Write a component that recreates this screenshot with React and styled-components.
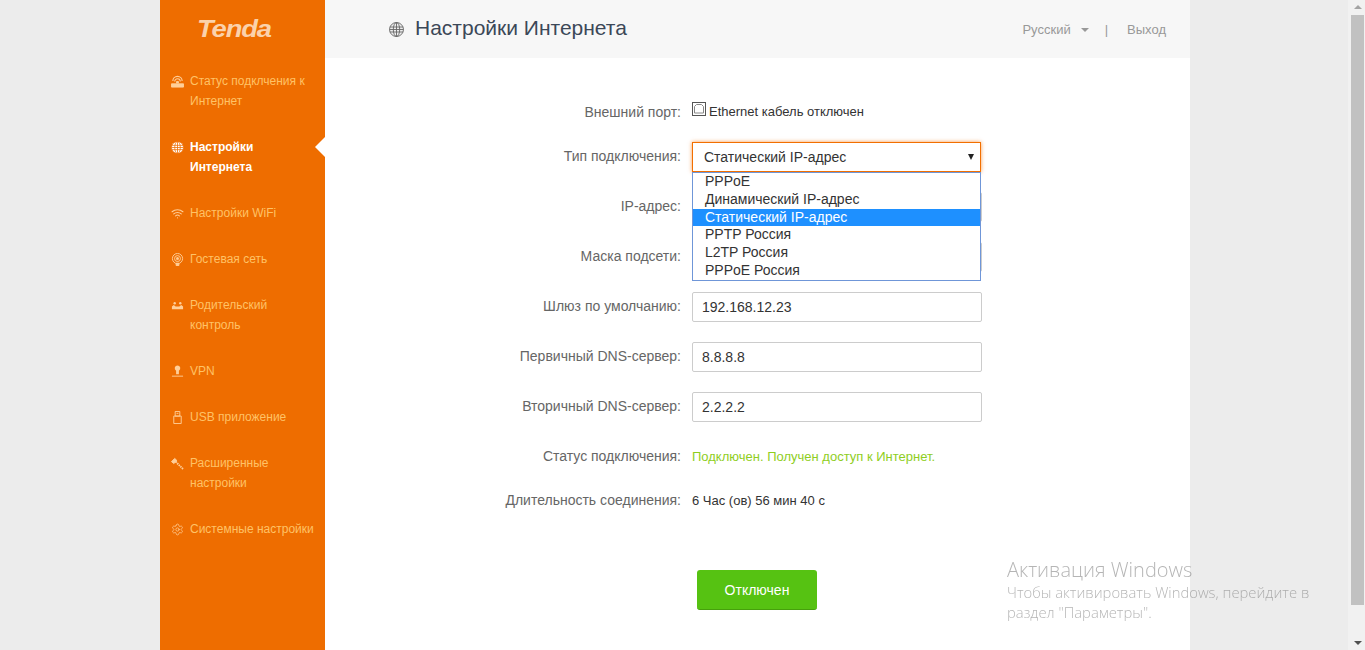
import styled, { createGlobalStyle } from "styled-components";
import { Wifi, Settings } from "lucide-react";

const GlobalStyle = createGlobalStyle`
    html, body {
        margin: 0;
        height: 100%;
        overflow: hidden;
        background: #ececec;
        font-family: "Liberation Sans", Arial, sans-serif;
    }
`;

const Shell = styled.div`
    display: flex;
    height: 650px;
`;

const Page = styled.div`
    display: flex;
    width: 1030px;
    margin-left: 160px;
`;

const Sidebar = styled.aside`
    width: 165px;
    flex-shrink: 0;
    background: #ee6d00;
`;

const Logo = styled.div`
    height: 71px;
    padding: 14px 0 0 37px;
    box-sizing: border-box;
    font-size: 24px;
    line-height: 30px;
    font-weight: bold;
    font-style: italic;
    letter-spacing: -1px;
    color: #fbd2ab;
    transform: scaleX(1.14);
    transform-origin: 37px 0;
`;

const NavItem = styled.div`
    position: relative;
    display: flex;
    padding-left: 11px;
    margin-bottom: 26px;
    font-size: 12px;
    line-height: 20px;
    color: ${(p) => (p.$active ? "#fff" : "#ffc266")};
    font-weight: ${(p) => (p.$active ? "bold" : "normal")};

    ${(p) => p.$active && `
        &::after {
            content: "";
            position: absolute;
            right: 0;
            top: 0;
            border: 10px solid transparent;
            border-left: 0;
            border-right-color: #fff;
        }
    `}
`;

const NavIcon = styled.span`
    width: 19px;
    height: 20px;
    flex-shrink: 0;
    display: flex;
    align-items: center;
    color: ${(p) => (p.$active ? "#fff" : "#ffcf99")};

    svg {
        width: 13px;
        height: 13px;
        display: block;
    }
`;

const Main = styled.main`
    flex: 1;
    background: #fff;
`;

const TopBar = styled.header`
    height: 58px;
    background: #f7f7f7;
    display: flex;
    align-items: center;
    justify-content: space-between;
    padding: 0 24px 0 64px;
`;

const Title = styled.h1`
    display: flex;
    align-items: center;
    gap: 11px;
    margin: 0;
    padding-bottom: 2px;
    font-size: 21px;
    font-weight: normal;
    color: #3c4858;

    svg {
        width: 15px;
        height: 15px;
        margin-top: 3px;
    }
`;

const TopLinks = styled.div`
    display: flex;
    align-items: center;
    font-size: 13px;
    color: #999;
`;

const Caret = styled.span`
    width: 0;
    height: 0;
    margin: 2px 16px 0 10px;
    border: 4px solid transparent;
    border-bottom: 0;
    border-top-color: #999;
`;

const Divider = styled.span`
    margin-right: 19px;
`;

const Form = styled.div`
    padding-top: 40px;
    position: relative;
`;

const Row = styled.div`
    display: flex;
    align-items: center;
    height: 30px;
    margin-bottom: ${(p) => p.$gap ?? 20}px;
`;

const Label = styled.label`
    width: 356px;
    flex-shrink: 0;
    margin-right: 11px;
    padding-bottom: 2px;
    text-align: right;
    font-size: 14px;
    color: #666;
`;

const Input = styled.div`
    width: 290px;
    height: 30px;
    box-sizing: border-box;
    border: 1px solid #ccc;
    border-radius: 2px;
    padding-left: 9px;
    font-size: 14px;
    line-height: 28px;
    color: #333;
`;

const PortInfo = styled.div`
    display: flex;
    align-items: center;
    gap: 3px;
    padding-bottom: 4px;
    font-size: 13px;
    color: #333;

    svg {
        width: 14px;
        height: 14px;
        margin-bottom: 5px;
    }
`;

const SelectBox = styled.div`
    width: 289px;
    height: 30px;
    box-sizing: border-box;
    display: flex;
    align-items: center;
    justify-content: space-between;
    padding: 0 6px 0 11px;
    border: 1px solid #f26f00;
    box-shadow: 0 0 4px rgba(242, 111, 0, 0.7);
    font-size: 14px;
    color: #333;
`;

const SelectArrow = styled.span`
    width: 0;
    height: 0;
    border: 3.5px solid transparent;
    border-bottom: 0;
    border-top: 6px solid #222;
`;

const Menu = styled.ul`
    position: absolute;
    left: 367px;
    top: 114px;
    width: 289px;
    box-sizing: border-box;
    margin: 0;
    padding: 0;
    list-style: none;
    background: #fff;
    border: 1px solid #6f96d8;
    font-size: 14px;
    color: #333;
`;

const MenuItem = styled.li`
    height: 17.8px;
    line-height: 17.8px;
    padding-left: 12px;
    background: ${(p) => (p.$selected ? "#1e90ff" : "transparent")};
    color: ${(p) => (p.$selected ? "#fff" : "inherit")};
`;

const StatusText = styled.span`
    padding-bottom: 2px;
    font-size: 13px;
    color: ${(p) => p.$color};
`;

const Actions = styled.div`
    margin: 54px 0 0 372px;
`;

const Button = styled.button`
    width: 120px;
    height: 40px;
    border: 0;
    border-bottom: 1px solid #46a00c;
    border-radius: 3px;
    background: #56c212;
    color: #fff;
    font: 14px "Liberation Sans", Arial, sans-serif;
`;

const Watermark = styled.div`
    position: fixed;
    left: 1007px;
    top: 557px;
    font-family: "Open Sans", sans-serif;
    font-weight: 300;
    font-size: 14.8px;
    line-height: 20px;
    color: rgba(120, 120, 120, 0.55);
    pointer-events: none;

    strong {
        display: block;
        font-weight: 300;
        font-size: 20px;
        line-height: 26px;
        margin-bottom: -1px;
    }
`;

const Scrollbar = styled.div`
    margin-left: auto;
    width: 17px;
    box-sizing: border-box;
    padding: 5px 1px 5px 3px;
    background: #f1f1f1;
    display: flex;
    flex-direction: column;
    align-items: center;
`;

const ScrollThumb = styled.div`
    width: 13px;
    height: 590px;
    margin: 6px 0 auto;
    background: #c1c1c1;
`;

const ScrollUp = styled.div`
    width: 0;
    height: 0;
    border: 4px solid transparent;
    border-top: 0;
    border-bottom-color: #a3a3a3;
`;

const ScrollDown = styled.div`
    width: 0;
    height: 0;
    border: 4px solid transparent;
    border-bottom: 0;
    border-top-color: #505050;
`;

const RouterIcon = () => (
    <svg viewBox="0 0 14 14" fill="none" stroke="currentColor">
        <path d="M.5 9.5V13h13V9.5z" fill="currentColor" />
        <path d="M2 6.5a5 5 0 0 1 10 0" strokeWidth="1.2" />
        <path d="M4 7a3 3 0 0 1 6 0" strokeWidth="1.2" />
        <path d="M6 9V7h2v2" fill="currentColor" />
    </svg>
);

const GridGlobe = ({ fill, line }) => (
    <svg viewBox="0 0 15 15" fill={fill} stroke={line} strokeWidth="0.9">
        <circle cx="7.5" cy="7.5" r="7" />
        <ellipse cx="7.5" cy="7.5" rx="3.2" ry="7" fill="none" />
        <path d="M7.5.5v14M1 5h13M1 10h13M.5 7.5h14" fill="none" />
    </svg>
);

const ParentIcon = () => (
    <svg viewBox="0 0 14 14" fill="currentColor">
        <path d="M1 11V8l2-1.5L5 8h4l2-1.5L13 8v3z" />
        <circle cx="4" cy="4.5" r="1.3" />
        <circle cx="10" cy="4.5" r="1.3" />
    </svg>
);

const GuestIcon = () => (
    <svg viewBox="0 0 14 14" fill="none" stroke="currentColor" strokeWidth="1">
        <circle cx="7" cy="6" r="5.5" />
        <circle cx="7" cy="6" r="3.2" />
        <circle cx="7" cy="6" r="1.2" fill="currentColor" />
        <path d="M5.5 11h3v2.5h-3z" fill="currentColor" />
    </svg>
);

const VpnIcon = () => (
    <svg viewBox="0 0 14 14" fill="currentColor">
        <path d="M7 .5a3 3 0 0 1 1.5 5.6V10h-3V6.1A3 3 0 0 1 7 .5z" />
        <path d="M1 11.5h12v1H1z" />
    </svg>
);

const UsbStickIcon = () => (
    <svg viewBox="0 0 14 14" fill="none" stroke="currentColor" strokeWidth="1">
        <path d="M4.5.5h5v5h-5zM3 5.5h8v8H3zM6 2.5h2" />
    </svg>
);

const HammerIcon = () => (
    <svg viewBox="0 0 14 14" fill="none" stroke="currentColor">
        <path d="M.5 5 4 1.5 6.5 4 3 7z" fill="currentColor" />
        <path d="M5 5l8 8" strokeWidth="2" strokeDasharray="1.6 .8" />
    </svg>
);

const navItems = [
    { icon: <RouterIcon />, lines: ["Статус подклчения к", "Интернет"] },
    { icon: <GridGlobe fill="currentColor" line="#ee6d00" />, lines: ["Настройки", "Интернета"], active: true },
    { icon: <Wifi />, lines: ["Настройки WiFi"] },
    { icon: <GuestIcon />, lines: ["Гостевая сеть"] },
    { icon: <ParentIcon />, lines: ["Родительский", "контроль"] },
    { icon: <VpnIcon />, lines: ["VPN"] },
    { icon: <UsbStickIcon />, lines: ["USB приложение"] },
    { icon: <HammerIcon />, lines: ["Расширенные", "настройки"] },
    { icon: <Settings strokeWidth={1.4} />, lines: ["Системные настройки"] },
];

const connectionTypes = [
    "PPPoE",
    "Динамический IP-адрес",
    "Статический IP-адрес",
    "PPTP Россия",
    "L2TP Россия",
    "PPPoE Россия",
];

export default function App() {
    return (
        <>
            <GlobalStyle />
            <Shell>
                <Page>
                    <Sidebar>
                        <Logo>Tenda</Logo>
                        {navItems.map((item) => (
                            <NavItem key={item.lines[0] + item.lines.length} $active={item.active}>
                                <NavIcon $active={item.active}>{item.icon}</NavIcon>
                                <div>
                                    {item.lines.map((line) => (
                                        <div key={line}>{line}</div>
                                    ))}
                                </div>
                            </NavItem>
                        ))}
                    </Sidebar>

                    <Main>
                        <TopBar>
                            <Title>
                                <GridGlobe fill="#eee" line="#666" />
                                Настройки Интернета
                            </Title>
                            <TopLinks>
                                Русский
                                <Caret />
                                <Divider>|</Divider>
                                Выход
                            </TopLinks>
                        </TopBar>

                        <Form>
                            <Row $gap={14}>
                                <Label>Внешний порт:</Label>
                                <PortInfo>
                                    <svg viewBox="0 0 14 14" fill="none" stroke="#555">
                                        <rect x="0.5" y="0.5" width="13" height="13" />
                                        <path d="M2.5 11V4.5L4.5 2.5h5l2 2V11z" stroke="#888" />
                                    </svg>
                                    Ethernet кабель отключен
                                </PortInfo>
                            </Row>
                            <Row>
                                <Label>Тип подключения:</Label>
                                <SelectBox>
                                    Статический IP-адрес
                                    <SelectArrow />
                                </SelectBox>
                            </Row>
                            <Row>
                                <Label>IP-адрес:</Label>
                                <Input />
                            </Row>
                            <Row>
                                <Label>Маска подсети:</Label>
                                <Input />
                            </Row>
                            <Row>
                                <Label>Шлюз по умолчанию:</Label>
                                <Input>192.168.12.23</Input>
                            </Row>
                            <Row>
                                <Label>Первичный DNS-сервер:</Label>
                                <Input>8.8.8.8</Input>
                            </Row>
                            <Row>
                                <Label>Вторичный DNS-сервер:</Label>
                                <Input>2.2.2.2</Input>
                            </Row>
                            <Row $gap={14}>
                                <Label>Статус подключения:</Label>
                                <StatusText $color="#8fce1e">Подключен. Получен доступ к Интернет.</StatusText>
                            </Row>
                            <Row $gap={0}>
                                <Label>Длительность соединения:</Label>
                                <StatusText $color="#333">6 Час (ов) 56 мин 40 с</StatusText>
                            </Row>

                            <Menu>
                                {connectionTypes.map((type, i) => (
                                    <MenuItem key={type} $selected={i === 2}>
                                        {type}
                                    </MenuItem>
                                ))}
                            </Menu>

                            <Actions>
                                <Button>Отключен</Button>
                            </Actions>
                        </Form>
                    </Main>
                </Page>

                <Scrollbar>
                    <ScrollUp />
                    <ScrollThumb />
                    <ScrollDown />
                </Scrollbar>
            </Shell>

            <Watermark>
                <strong>Активация Windows</strong>
                Чтобы активировать Windows, перейдите в
                <br />
                раздел "Параметры".
            </Watermark>
        </>
    );
}
